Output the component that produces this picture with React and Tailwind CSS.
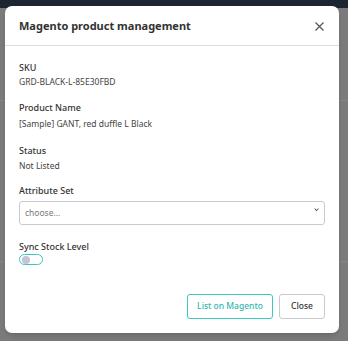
import React, { useState } from 'react';

function App() {
  const [sync, setSync] = useState(false);

  return (
    <div className="relative w-[348px] h-[341px] overflow-hidden bg-[#7b7b7b]" style={{ fontFamily: '"Noto Sans", "Liberation Sans", sans-serif' }}>
      {/* page behind the backdrop */}
      <div className="h-[8px] bg-[#1c2630]" />
      <div className="mt-[92px] border-t border-[#858585]" />
      <div className="mt-[160px] border-t border-[#858585]" />

      {/* Modal */}
      <div className="absolute left-[5px] top-[6px] w-[334px] h-[327px] bg-white rounded-[7px] flex flex-col shadow-md">
        <div className="flex items-center justify-between h-[40px] pl-[14px] pr-[15px] pt-[2px] border-b border-[#dcdce3]">
          <h2 className="text-[11px] font-bold text-[#333]">Magento product management</h2>
          <button className="text-[#555]">
            <svg width="9" height="9" viewBox="0 0 9 9" fill="none" stroke="currentColor" strokeWidth="1.2">
              <path d="M0.5 0.5L8.5 8.5M8.5 0.5L0.5 8.5" />
            </svg>
          </button>
        </div>

        <div className="flex-1 px-[14px] pt-[16px] text-[#333]">
          <div className="mb-[13px]">
            <div className="text-[9px] font-medium leading-[12px]">SKU</div>
            <div className="text-[8.5px] leading-[14px] text-[#444] mt-[1px]">GRD-BLACK-L-85E30FBD</div>
          </div>
          <div className="mb-[14px]">
            <div className="text-[9px] font-medium leading-[12px]">Product Name</div>
            <div className="text-[8.5px] leading-[14px] text-[#444] mt-[3px]">[Sample] GANT, red duffle L Black</div>
          </div>
          <div className="mb-[12px]">
            <div className="text-[9px] font-medium leading-[12px]">Status</div>
            <div className="text-[8.5px] leading-[14px] text-[#444] mt-[2px]">Not Listed</div>
          </div>
          <div className="mb-[16px]">
            <div className="text-[9px] font-medium leading-[12px]">Attribute Set</div>
            <div className="relative mt-[1px]">
              <select className="w-full h-[24px] appearance-none rounded-[3px] border border-[#c9c9d3] bg-white px-[5px] text-[8.5px] text-[#777]">
                <option>choose...</option>
              </select>
              <svg className="absolute right-[6px] top-[10px]" width="5" height="4" viewBox="0 0 6 5" fill="#444">
                <path d="M0 0.5L3 4.2L6 0.5L4.7 0.5L3 2.6L1.3 0.5Z" />
              </svg>
            </div>
          </div>
          <div>
            <div className="text-[9px] font-medium leading-[12px] mb-[1px]">Sync Stock Level</div>
            <button
              onClick={() => setSync(!sync)}
              className="relative block w-[24px] h-[11px] rounded-full border border-[#3cc8bc] bg-white"
            >
              <span className="absolute left-[1.5px] top-[0.5px] w-[8px] h-[8px] rounded-full bg-[#c4c4d4]" />
            </button>
          </div>
        </div>

        <div className="flex justify-end gap-[6px] px-[14px] pb-[14px]">
          <button className="h-[25px] w-[86px] rounded-[3px] border border-[#3cc8bc] text-[8.5px] font-medium text-[#2fb8ad]">
            List on Magento
          </button>
          <button className="h-[25px] w-[46px] rounded-[3px] border border-[#c9c9d3] text-[8.5px] font-medium text-[#333]">
            Close
          </button>
        </div>
      </div>
    </div>
  );
}

export default App;
